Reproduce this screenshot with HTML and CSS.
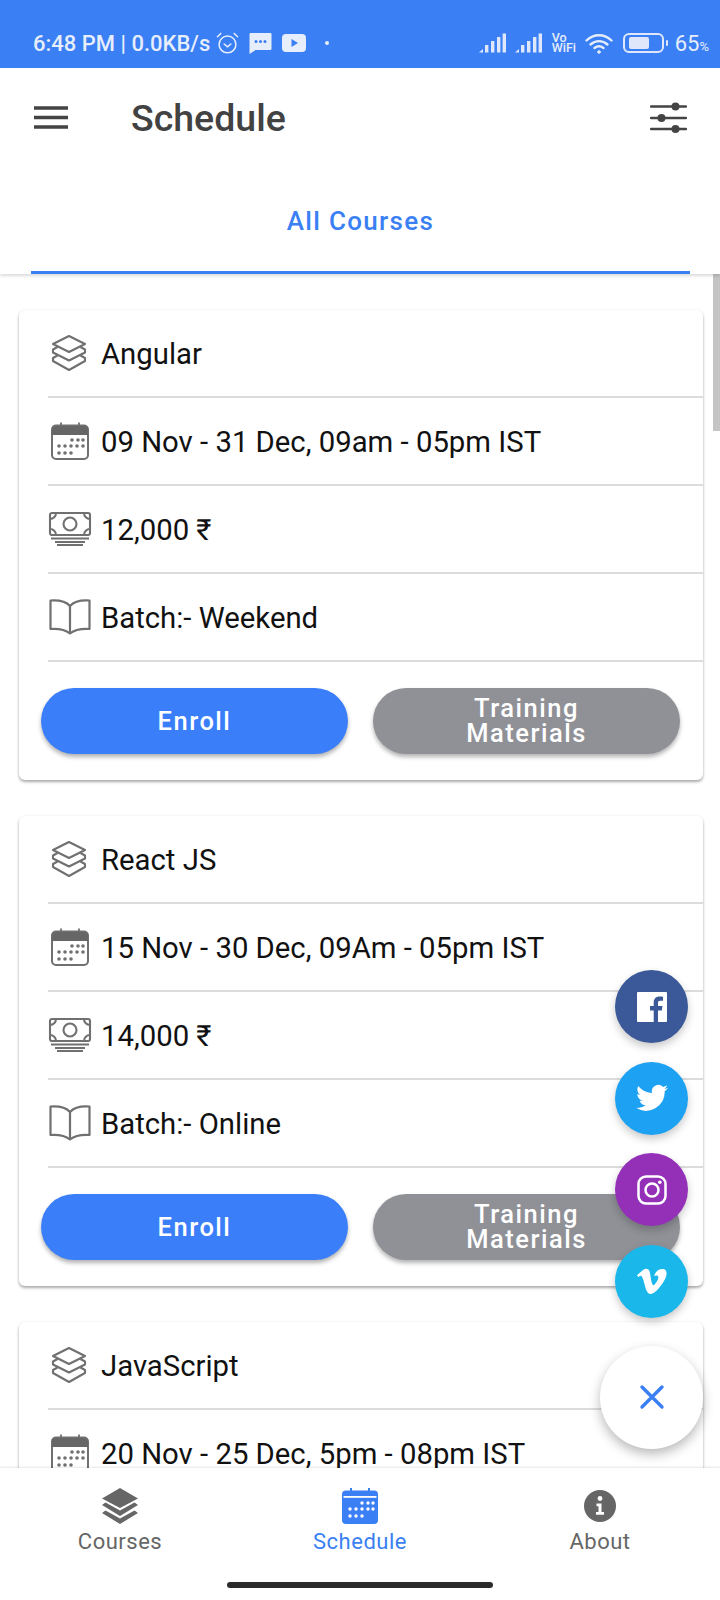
FILE: index.html
```html
<!DOCTYPE html>
<html lang="en">
<head>
<meta charset="utf-8">
<title>Schedule</title>
<link rel="stylesheet" href="styles.css">
</head>
<body>
<svg class="defs" width="0" height="0" aria-hidden="true">
  <defs>
    <symbol id="i-layers" viewBox="0 -1 38 38">
      <g fill="none" stroke="#707070" stroke-width="2.100" stroke-linejoin="round">
        <path d="M18 1 34 9 18 17 2 9Z"/>
        <path d="M6.500 12 2 14.500 2 17.500 18 25.500 34 17.500 34 14.500 29.500 12"/>
        <path d="M6.500 20.500 2 23 2 26 18 35 34 26 34 23 29.500 20.500"/>
      </g>
    </symbol>
    <symbol id="i-cal" viewBox="0 0 38 38">
      <path d="M10 0.500V5M28 0.500V5" stroke="#707070" stroke-width="1.800"/>
      <rect x="1" y="3.500" width="36" height="33.500" rx="4" fill="none" stroke="#707070" stroke-width="2"/>
      <path d="M1 8a4 4 0 0 1 4-4h28a4 4 0 0 1 4 4v5H1Z" fill="#666"/>
      <g fill="#707070">
        <circle cx="21" cy="18" r="1.800"/><circle cx="27" cy="18" r="1.800"/><circle cx="32" cy="18" r="1.800"/>
        <circle cx="8" cy="24" r="1.800"/><circle cx="14" cy="24" r="1.800"/><circle cx="20" cy="24" r="1.800"/><circle cx="26" cy="24" r="1.800"/><circle cx="32" cy="24" r="1.800"/>
        <circle cx="8" cy="31" r="1.800"/><circle cx="14" cy="31" r="1.800"/><circle cx="20" cy="31" r="1.800"/>
      </g>
    </symbol>
    <symbol id="i-money" viewBox="-2 -2 46 38">
      <g fill="none" stroke="#707070" stroke-width="2.100">
        <rect x="1" y="1" width="40" height="22" rx="2"/>
        <circle cx="21" cy="12" r="6.500"/>
        <path d="M1 7a6 6 0 0 0 6-6M35 1a6 6 0 0 0 6 6M1 17a6 6 0 0 1 6 6M35 23a6 6 0 0 1 6-6"/>
        <path d="M2 26.500H40M6 30H36M8 33H34"/>
      </g>
    </symbol>
    <symbol id="i-book" viewBox="-2 -1 46 38">
      <path d="M21 7C17 2.500 9 1 1.500 1.500V30C9 29.500 16 30.500 21 34.500 26 30.500 33 29.500 40.500 30V1.500C33 1 25 2.500 21 7ZM21 7V33" fill="none" stroke="#707070" stroke-width="2.200" stroke-linejoin="round"/>
    </symbol>
  </defs>
</svg>

<div class="screen">
  <header class="status">
    <div class="status-left">
      <span class="status-text">6:48 PM | 0.0KB/s</span>
      <svg class="st-alarm" width="23" height="22" viewBox="0 0 24 23" fill="none" stroke="#e6edfb" stroke-width="1.600" stroke-linecap="round" stroke-linejoin="round"><circle cx="12" cy="13" r="8.800"/><path d="M8.500 12.500 12 15.500l3.500-3M1.500 5 5 1.500M22.500 5 19 1.500"/></svg>
      <svg class="st-msg" width="23" height="21" viewBox="0 0 22 21"><path d="M1 0h20a1 1 0 0 1 1 1v15a1 1 0 0 1-1 1H6L0 21V1a1 1 0 0 1 1-1Z" fill="#e6edfb"/><circle cx="6.500" cy="8.500" r="1.500" fill="#3a7ff3"/><circle cx="11" cy="8.500" r="1.500" fill="#3a7ff3"/><circle cx="15.500" cy="8.500" r="1.500" fill="#3a7ff3"/></svg>
      <svg class="st-yt" width="24" height="18" viewBox="0 0 24 18"><rect width="24" height="18" rx="4" fill="#e6edfb"/><path d="M9.500 5 16 9l-6.500 4Z" fill="#3a7ff3"/></svg>
      <span class="st-dot"></span>
    </div>
    <div class="status-right">
      <svg width="27" height="20" viewBox="0 0 27 20" fill="#dfe8fa"><path d="M0 19.500 4 16V19.500Z"/><rect x="6" y="12" width="3.400" height="7.500"/><rect x="12" y="8" width="3.400" height="11.500"/><rect x="18" y="4" width="3.400" height="15.500"/><rect x="23.600" y="0.500" width="3.400" height="19"/></svg>
      <svg class="st-sig2" width="27" height="20" viewBox="0 0 27 20" fill="#dfe8fa"><path d="M0 19.500 4 16V19.500Z"/><rect x="6" y="12" width="3.400" height="7.500"/><rect x="12" y="8" width="3.400" height="11.500"/><rect x="18" y="4" width="3.400" height="15.500"/><rect x="23.600" y="0.500" width="3.400" height="19"/></svg>
      <span class="vowifi">Vo WiFi</span>
      <svg class="st-wifi" width="28" height="21" viewBox="0 0 28 21" fill="none" stroke="#e6edfb" stroke-width="2.400" stroke-linecap="round"><path d="M1.500 7.500C8.500 .5 19.500 .5 26.500 7.500"/><path d="M5.500 11.500C10.500 7 17.500 7 22.500 11.500"/><path d="M9.500 15C12.500 12.800 15.500 12.800 18.500 15"/><circle cx="14" cy="19" r="1.300" fill="#e6edfb" stroke-width="1"/></svg>
      <svg class="st-batt" width="45" height="20" viewBox="0 0 45 20"><rect x="1" y="1" width="39" height="18" rx="5" fill="none" stroke="#dfe8fa" stroke-width="2"/><rect x="6" y="4" width="20" height="12" rx="2" fill="#dfe8fa"/><rect x="43" y="7" width="2" height="6" rx="1" fill="#dfe8fa"/></svg>
      <span class="batt-text">65<small>%</small></span>
    </div>
  </header>

  <div class="appbar">
    <svg class="menu-icon" width="34" height="24" viewBox="0 0 34 24"><path d="M0 2H34M0 11.500H34M0 21H34" stroke="#444" stroke-width="3.400"/></svg>
    <h1 class="title">Schedule</h1>
    <svg class="tune-icon" width="37" height="32" viewBox="0 0 37 32" fill="#444"><path d="M1 4.500H36M1 16H36M1 27H36" stroke="#444" stroke-width="2.400" stroke-linecap="round"/><circle cx="25.500" cy="4.500" r="4"/><circle cx="11.500" cy="16" r="4"/><circle cx="25.500" cy="27" r="4"/></svg>
  </div>

  <nav class="tabs"><div class="tab">All Courses</div></nav>

  <main class="list">
    <article class="card">
      <div class="row"><svg class="ic"><use href="#i-layers"/></svg><span>Angular</span></div>
      <div class="row"><svg class="ic"><use href="#i-cal"/></svg><span>09 Nov - 31 Dec, 09am - 05pm IST</span></div>
      <div class="row"><svg class="ic"><use href="#i-money"/></svg><span>12,000 ₹</span></div>
      <div class="row"><svg class="ic"><use href="#i-book"/></svg><span>Batch:- Weekend</span></div>
      <div class="actions"><div class="btn primary">Enroll</div><div class="btn muted">Training Materials</div></div>
    </article>
    <article class="card">
      <div class="row"><svg class="ic"><use href="#i-layers"/></svg><span>React JS</span></div>
      <div class="row"><svg class="ic"><use href="#i-cal"/></svg><span>15 Nov - 30 Dec, 09Am - 05pm IST</span></div>
      <div class="row"><svg class="ic"><use href="#i-money"/></svg><span>14,000 ₹</span></div>
      <div class="row"><svg class="ic"><use href="#i-book"/></svg><span>Batch:- Online</span></div>
      <div class="actions"><div class="btn primary">Enroll</div><div class="btn muted">Training Materials</div></div>
    </article>
    <article class="card">
      <div class="row"><svg class="ic"><use href="#i-layers"/></svg><span>JavaScript</span></div>
      <div class="row"><svg class="ic"><use href="#i-cal"/></svg><span>20 Nov - 25 Dec, 5pm - 08pm IST</span></div>
    </article>
  </main>
  <div class="scrollbar"></div>

  <div class="fabs">
    <div class="fab fb"><svg width="30" height="30" viewBox="0 0 30 30"><path d="M1 0h28a1 1 0 0 1 1 1v28a1 1 0 0 1-1 1h-8V18.500h3.800l.7-4.500H21v-3c0-1.400.5-2.300 2.300-2.300H26V4.800C25.400 4.700 24 4.600 22.500 4.600c-3.500 0-5.800 2.100-5.800 6V14H13v4.500h3.700V30H1a1 1 0 0 1-1-1V1a1 1 0 0 1 1-1Z" fill="#fff"/></svg></div>
    <div class="fab tw"><svg width="32" height="28" viewBox="0 0 24 21"><path d="M24 2.900c-.9.400-1.800.7-2.800.8 1-.6 1.800-1.600 2.200-2.700-1 .6-2 1-3.100 1.200A4.900 4.900 0 0 0 12 6.700C7.900 6.500 4.300 4.600 1.700 1.500.4 3.800 1 6.700 3.200 8.100c-.8 0-1.600-.2-2.200-.6 0 2.300 1.600 4.400 3.900 4.900-.7.200-1.500.2-2.200.1.600 2 2.400 3.400 4.600 3.400A9.900 9.900 0 0 1 0 17.900 14 14 0 0 0 21.500 5.500c1-.7 1.800-1.600 2.500-2.600Z" fill="#fff"/></svg></div>
    <div class="fab ig"><svg width="30" height="30" viewBox="0 0 30 30" fill="none" stroke="#fff" stroke-width="2.500"><rect x="1.500" y="1.500" width="27" height="27" rx="7.500"/><circle cx="15" cy="15" r="6.500"/><circle cx="22.800" cy="7.200" r="1.800" fill="#fff" stroke="none"/></svg></div>
    <div class="fab vm"><svg width="30" height="27" viewBox="0 0 30 27"><path d="M29.500 6.500c-.2 2.900-2.200 6.800-6.100 11.800C19.400 23.500 16 26 13.300 26c-1.700 0-3.200-1.600-4.400-4.800L6.500 12.500C5.600 9.300 4.600 7.700 3.600 7.700c-.2 0-1 .5-2.300 1.400L0 7.300C1.500 6 2.900 4.700 4.300 3.500 6.300 1.800 7.800.9 8.800.8c2.300-.2 3.800 1.400 4.300 4.900.6 3.800 1 6.100 1.200 7 .7 3 1.400 4.500 2.200 4.500.6 0 1.500-1 2.800-2.900 1.200-1.900 1.900-3.400 2-4.400.2-1.700-.5-2.500-2-2.500-.7 0-1.500.2-2.200.5C18.600 3.300 21.500 1 25.700 1.100c3.100.1 4 2 3.800 5.400Z" fill="#fff"/></svg></div>
    <div class="fab close"><svg width="26" height="26" viewBox="0 0 26 26"><path d="M3 3 23 23M23 3 3 23" stroke="#3a7ff3" stroke-width="3.400" stroke-linecap="round"/></svg></div>
  </div>

  <footer class="bottom">
    <div class="nav-items">
      <div class="nav-item">
        <svg width="38" height="36" viewBox="0 0 38 36" fill="#666"><path d="M19 0 37 10.500 19 20 1 10.500Z"/><path d="M4.500 14.500 1 17 19 28 37 17 33.500 14.500 19 22.500Z"/><path d="M4.500 22.500 1 25 19 36 37 25 33.500 22.500 19 30.500Z"/></svg>
        <span>Courses</span>
      </div>
      <div class="nav-item active">
        <svg width="36" height="36" viewBox="0 0 36 36"><path d="M9 0v5M27 0v5" stroke="#3a7ff3" stroke-width="2"/><rect y="2.500" width="36" height="33.500" rx="4" fill="#3a7ff3"/><rect x="1.500" y="8" width="33" height="1.800" fill="#fff"/><g fill="#fff"><circle cx="20" cy="15" r="1.700"/><circle cx="26" cy="15" r="1.700"/><circle cx="31" cy="15" r="1.700"/><circle cx="8" cy="21" r="1.700"/><circle cx="14" cy="21" r="1.700"/><circle cx="20" cy="21" r="1.700"/><circle cx="26" cy="21" r="1.700"/><circle cx="31" cy="21" r="1.700"/><circle cx="8" cy="28" r="1.700"/><circle cx="14" cy="28" r="1.700"/><circle cx="20" cy="28" r="1.700"/></g></svg>
        <span>Schedule</span>
      </div>
      <div class="nav-item">
        <svg width="36" height="36" viewBox="-2 -2 36 36"><circle cx="16" cy="16" r="16" fill="#666"/><circle cx="16" cy="8.500" r="2.400" fill="#fff"/><path d="M12.500 13.500h5V22h2.500v2.800h-8V22h2.500v-5.700h-2Z" fill="#fff"/></svg>
        <span>About</span>
      </div>
    </div>
    <div class="home-bar"></div>
  </footer>
</div>
</body>
</html>
```

FILE: styles.css
```css
* { box-sizing: border-box; }
html, body { margin: 0; padding: 0; }
body { width: 720px; height: 1600px; overflow: hidden; background: #fff; font-family: Roboto, "Liberation Sans", sans-serif; }
.defs { position: absolute; }
.screen { position: relative; width: 720px; height: 1600px; overflow: hidden; display: flex; flex-direction: column; background: #fff; }

.status { flex: none; height: 68px; background: #3a7ff3; display: flex; justify-content: space-between; align-items: center; padding: 18px 11px 0 33px; color: #e6edfb; }
.status-left, .status-right { display: flex; align-items: center; }
.status-text { font-size: 22px; font-weight: 500; white-space: nowrap; }
.st-alarm { margin-left: 6px; }
.st-msg { margin-left: 10px; }
.st-yt { margin-left: 10px; }
.st-dot { width: 4px; height: 4px; border-radius: 50%; background: #e6edfb; margin-left: 19px; }
.st-sig2 { margin-left: 9px; }
.vowifi { display: block; font-size: 12.500px; line-height: 10.500px; font-weight: 500; width: 24px; margin-left: 10px; word-spacing: 24px; }
.st-wifi { margin-left: 9px; }
.st-batt { margin-left: 10px; }
.batt-text { font-size: 22px; font-weight: 400; margin-left: 7px; white-space: nowrap; }
.batt-text small { font-size: 13px; }

.appbar { flex: none; height: 100px; display: flex; align-items: center; padding: 0 33px 0 34px; }
.title { margin: 0 0 0 63px; font-size: 37.500px; font-weight: 500; color: #424242; flex: 1; }

.tabs { flex: none; height: 106px; padding: 0 30px 0 31px; position: relative; z-index: 2; box-shadow: 0 2px 3px rgba(0,0,0,.14); background: #fff; }
.tab { height: 100%; border-bottom: 3.500px solid #3a7ff3; text-align: center; color: #3a7ff3; font-size: 26px; font-weight: 500; letter-spacing: 1.300px; line-height: 106px; }

.list { flex: 1; min-height: 0; padding: 36px 17px 0 19px; display: flex; flex-direction: column; gap: 36px; overflow: hidden; }
.card { flex: none; border-radius: 6px; background: #fff; box-shadow: 0 2px 3px rgba(0,0,0,.32), 0 0 3px rgba(0,0,0,.06); padding-left: 29px; }
.row { height: 88px; border-bottom: 2px solid #dcdcdc; display: flex; align-items: center; font-size: 29.300px; color: #111; white-space: nowrap; }
.row span { margin-left: 8px; padding-top: 1px; }
.ic { flex: none; width: 46px; height: 38px; margin-left: -1px; }
.actions { height: 118px; margin-left: -7px; display: flex; gap: 25px; padding: 26px 22px 0 0; align-items: flex-start; }
.btn { flex: none; width: 307px; height: 66px; border-radius: 33px; display: flex; align-items: center; justify-content: center; text-align: center; color: #fff; font-size: 25.500px; font-weight: 500; letter-spacing: 1.500px; line-height: 25px; box-shadow: 0 3px 4px rgba(0,0,0,.3); padding: 0 70px; }
.primary { background: #3a7ff9; }
.muted { background: #909197; }

.scrollbar { position: absolute; right: 0; top: 273px; width: 7px; height: 158px; background: #c4c4c4; }

.fabs { position: absolute; right: 17px; top: 970px; display: flex; flex-direction: column; align-items: center; gap: 18.670px; }
.fab { width: 73px; height: 73px; border-radius: 50%; display: flex; align-items: center; justify-content: center; box-shadow: 0 4px 8px rgba(0,0,0,.22); }
.fb { background: #3b5998; }
.tw { background: #1da1f2; }
.ig { background: #9430b8; }
.vm { background: #1ab7ea; }
.close { width: 103px; height: 103px; background: #fff; margin-top: 9.330px; box-shadow: 0 5px 12px rgba(0,0,0,.28); }

.bottom { flex: none; height: 132px; position: relative; z-index: 2; background: #fff; box-shadow: 0 -1px 2px rgba(0,0,0,.1); }
.nav-items { display: flex; padding-top: 20px; }
.nav-item { flex: 1; display: flex; flex-direction: column; align-items: center; gap: 5px; font-size: 22px; letter-spacing: .5px; color: #666; }
.nav-item span { line-height: 26px; }
.nav-item.active { color: #3a7ff3; }
.home-bar { position: absolute; left: 227px; bottom: 12px; width: 266px; height: 6px; border-radius: 3px; background: #2b2b2b; }
```
